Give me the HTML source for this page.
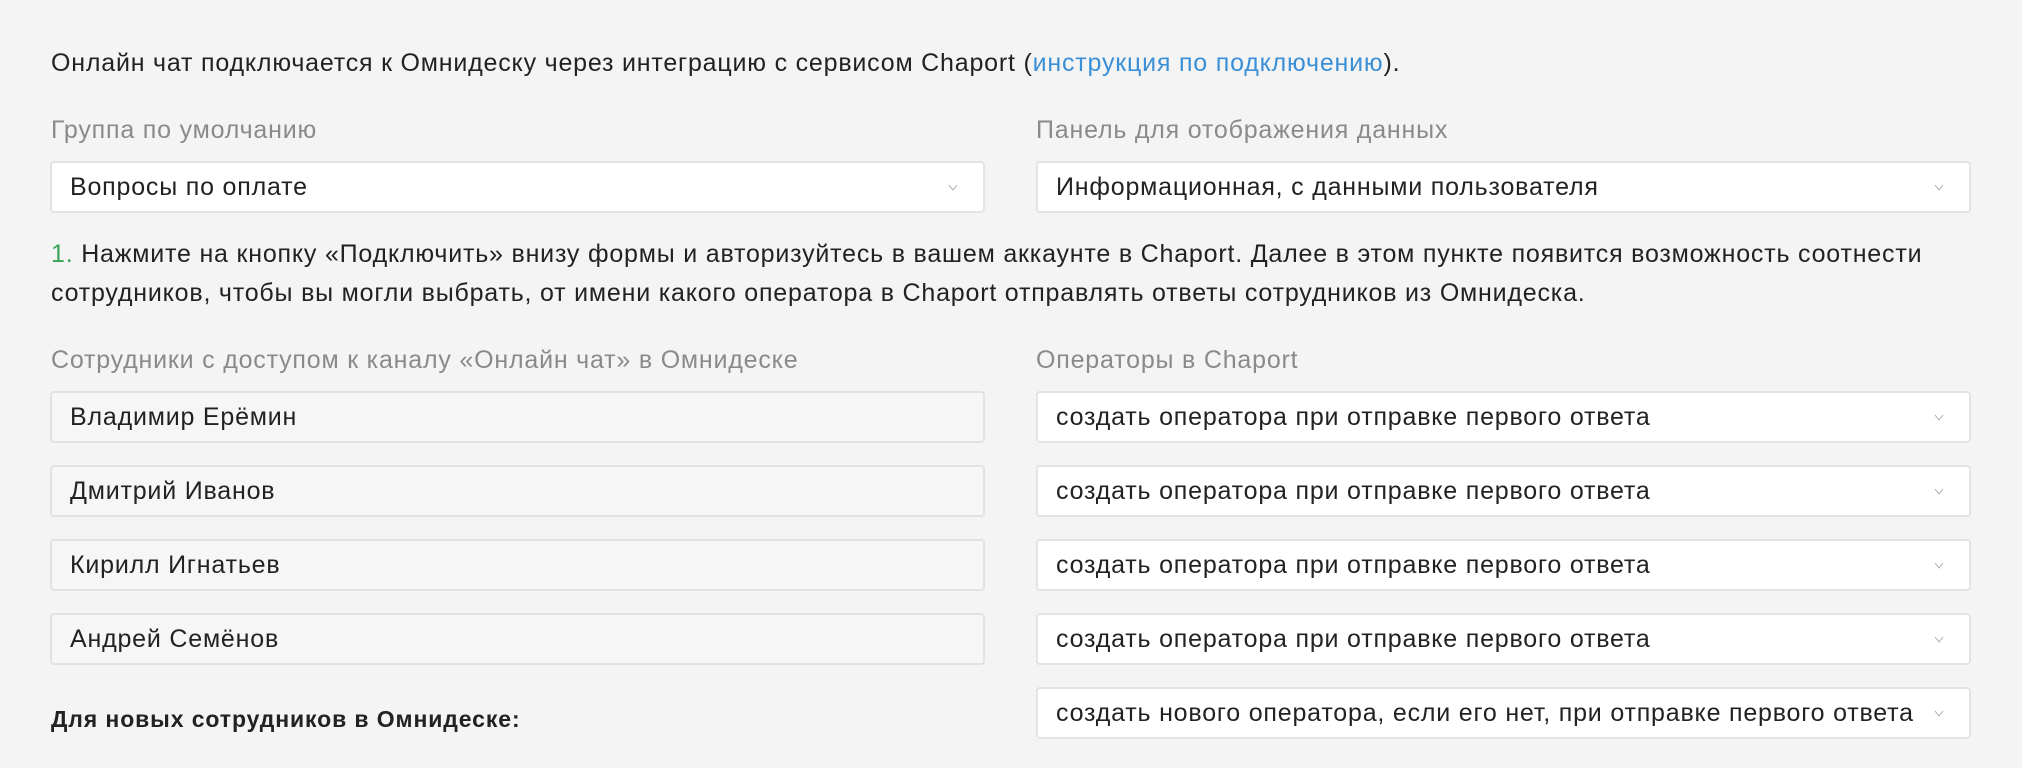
<!DOCTYPE html>
<html><head><meta charset="utf-8"><style>
*{margin:0;padding:0;box-sizing:border-box}
body{width:2022px;height:768px;background:#f4f4f4;font-family:"Liberation Sans","DejaVu Sans",sans-serif;font-size:25px;color:#222;position:relative;overflow:hidden;letter-spacing:0.8px}
.a{position:absolute;white-space:nowrap;line-height:26px}
.lbl{color:#8a8a8a}
.box{position:absolute;height:52px;border:2px solid #e3e3e3;border-radius:4px;background:#fff;padding-left:18px;line-height:48px;white-space:nowrap}
.ro{background:#f6f6f6;border-color:#e2e2e2}
.L{left:50px;width:935px}
.R{left:1036px;width:935px}
.chev{position:absolute;right:24px;top:18px;width:12px;height:12px}
a{color:#3a8fd6;text-decoration:none}
</style></head><body>
<div class="a" style="left:51px;top:50px">Онлайн чат подключается к Омнидеску через интеграцию с сервисом Chaport (<a>инструкция по подключению</a>).</div>
<div class="a lbl" style="left:51px;top:117px">Группа по умолчанию</div>
<div class="a lbl" style="left:1036px;top:117px">Панель для отображения данных</div>
<div class="box L" style="top:161px">Вопросы по оплате<svg class="chev" viewBox="0 0 12 12"><path d="M2 4l4 5 4-5" fill="none" stroke="#aaa" stroke-width="1"/></svg></div>
<div class="box R" style="top:161px">Информационная, с данными пользователя<svg class="chev" viewBox="0 0 12 12"><path d="M2 4l4 5 4-5" fill="none" stroke="#aaa" stroke-width="1"/></svg></div>
<div class="a" style="left:51px;top:241px"><span style="color:#3aa357">1.</span> Нажмите на кнопку «Подключить» внизу формы и авторизуйтесь в вашем аккаунте в Chaport. Далее в этом пункте появится возможность соотнести</div>
<div class="a" style="left:51px;top:280px">сотрудников, чтобы вы могли выбрать, от имени какого оператора в Chaport отправлять ответы сотрудников из Омнидеска.</div>
<div class="a lbl" style="left:51px;top:347px">Сотрудники с доступом к каналу «Онлайн чат» в Омнидеске</div>
<div class="a lbl" style="left:1036px;top:347px">Операторы в Chaport</div>

<div class="box L ro" style="top:391px">Владимир Ерёмин</div>
<div class="box R" style="top:391px">создать оператора при отправке первого ответа<svg class="chev" viewBox="0 0 12 12"><path d="M2 4l4 5 4-5" fill="none" stroke="#aaa" stroke-width="1"/></svg></div>
<div class="box L ro" style="top:465px">Дмитрий Иванов</div>
<div class="box R" style="top:465px">создать оператора при отправке первого ответа<svg class="chev" viewBox="0 0 12 12"><path d="M2 4l4 5 4-5" fill="none" stroke="#aaa" stroke-width="1"/></svg></div>
<div class="box L ro" style="top:539px">Кирилл Игнатьев</div>
<div class="box R" style="top:539px">создать оператора при отправке первого ответа<svg class="chev" viewBox="0 0 12 12"><path d="M2 4l4 5 4-5" fill="none" stroke="#aaa" stroke-width="1"/></svg></div>
<div class="box L ro" style="top:613px">Андрей Семёнов</div>
<div class="box R" style="top:613px">создать оператора при отправке первого ответа<svg class="chev" viewBox="0 0 12 12"><path d="M2 4l4 5 4-5" fill="none" stroke="#aaa" stroke-width="1"/></svg></div>
<div class="a" style="left:51px;top:706px;font-weight:bold;font-size:23px;letter-spacing:0.9px">Для новых сотрудников в Омнидеске:</div>
<div class="box R" style="top:687px">создать нового оператора, если его нет, при отправке первого ответа<svg class="chev" viewBox="0 0 12 12"><path d="M2 4l4 5 4-5" fill="none" stroke="#aaa" stroke-width="1"/></svg></div>
</body></html>
